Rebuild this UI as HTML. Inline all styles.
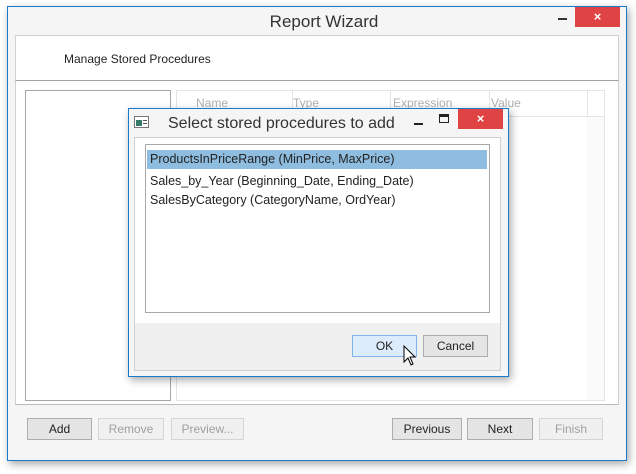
<!DOCTYPE html><html><head><style>
body{margin:0;width:636px;height:474px;background:#fff;position:relative;font-family:"Liberation Sans",sans-serif;font-size:12px;color:#222;overflow:hidden}
div{position:absolute;box-sizing:border-box}
.btn{border:1px solid #adadad;background:#e5e5e5;text-align:center;line-height:21px;font-size:12px}
.dis{color:#a0a0a0;border-color:#d5d5d5;background:#f0f0f0}
</style></head><body>
<div style="left:7px;top:6px;width:620px;height:455px;border:1px solid #1979ca;background:#f5f5f5;box-shadow:2px 3px 8px rgba(0,0,0,.35)"></div>
<div style="left:0;top:12px;width:636px;text-align:center;font-size:17px;color:#333;padding-left:12px">Report Wizard</div>
<div style="left:558px;top:18px;width:9px;height:2px;background:#333"></div>
<div style="left:575px;top:7px;width:45px;height:20px;background:#e04343;color:#fff;text-align:center;font-size:13px;line-height:19px;font-weight:bold">×</div>
<div style="left:15px;top:35px;width:604px;height:46px;background:#fff;border:1px solid #d0d0d0;border-bottom:1px solid #a0a0a0"></div>
<div style="left:64px;top:52px;font-size:12px">Manage Stored Procedures</div>
<div style="left:15px;top:81px;width:604px;height:324px;background:#fff;border-left:1px solid #d0d0d0;border-right:1px solid #d0d0d0;border-bottom:1px solid #bbb"></div>
<div style="left:25px;top:90px;width:146px;height:311px;border:1px solid #a8a8a8"></div>
<div style="left:176px;top:90px;width:429px;height:311px;border:1px solid #e5e5e5"></div>
<div style="left:177px;top:91px;width:427px;height:26px;border-bottom:1px solid #e5e5e5;color:#b0b0b0"><span style="position:absolute;left:19px;top:5px">Name</span><span style="position:absolute;left:116px;top:5px">Type</span><span style="position:absolute;left:216px;top:5px">Expression</span><span style="position:absolute;left:314px;top:5px">Value</span></div>
<div style="left:292px;top:91px;width:1px;height:26px;background:#e5e5e5"></div>
<div style="left:390px;top:91px;width:1px;height:26px;background:#e5e5e5"></div>
<div style="left:489px;top:91px;width:1px;height:26px;background:#e5e5e5"></div>
<div style="left:587px;top:91px;width:1px;height:26px;background:#e5e5e5"></div>
<div style="left:587px;top:117px;width:17px;height:283px;background:#fafafa"></div>
<div style="left:27px;top:418px;width:65px;height:22px" class="btn">Add</div>
<div style="left:98px;top:418px;width:66px;height:22px" class="btn dis">Remove</div>
<div style="left:171px;top:418px;width:73px;height:22px" class="btn dis">Preview...</div>
<div style="left:392px;top:418px;width:70px;height:22px" class="btn">Previous</div>
<div style="left:467px;top:418px;width:66px;height:22px" class="btn">Next</div>
<div style="left:539px;top:418px;width:64px;height:22px" class="btn dis">Finish</div>
<!-- dialog -->
<div style="left:128px;top:108px;width:381px;height:269px;border:1px solid #1979ca;background:#f5f5f5;box-shadow:2px 3px 8px rgba(0,0,0,.35)"></div>
<div style="left:134px;top:116px;width:15px;height:12px;border:1px solid #777;background:#fff"><div style="left:1px;top:3px;width:6px;height:6px;background:#3a7a6a"></div><div style="left:8px;top:3px;width:4px;height:1px;background:#555"></div><div style="left:8px;top:6px;width:4px;height:1px;background:#555"></div></div>
<div style="left:168px;top:115px;font-size:16px;color:#333">Select stored procedures to add</div>
<div style="left:414px;top:123px;width:9px;height:2px;background:#222"></div>
<div style="left:439px;top:114px;width:10px;height:9px;border:1px solid #222;border-top-width:3px"></div>
<div style="left:458px;top:109px;width:45px;height:20px;background:#e04343;color:#fff;text-align:center;font-size:13px;line-height:19px;font-weight:bold">×</div>
<div style="left:134px;top:137px;width:367px;height:234px;border:1px solid #d0d0d0;background:#f0f0f0"></div>
<div style="left:135px;top:138px;width:365px;height:185px;background:#fff"></div>
<div style="left:145px;top:144px;width:345px;height:169px;border:1px solid #a8a8a8;background:#fff"></div>
<div style="left:147px;top:150px;width:340px;height:19px;background:#8fbde0"></div>
<div style="left:150px;top:152px;font-size:12.5px">ProductsInPriceRange (MinPrice, MaxPrice)</div>
<div style="left:150px;top:174px;font-size:12.5px">Sales_by_Year (Beginning_Date, Ending_Date)</div>
<div style="left:150px;top:193px;font-size:12.5px">SalesByCategory (CategoryName, OrdYear)</div>
<div style="left:352px;top:335px;width:65px;height:22px;border-color:#7eb4ea;background:#dcecfc" class="btn">OK</div>
<div style="left:423px;top:335px;width:65px;height:22px" class="btn">Cancel</div>
<svg style="position:absolute;left:403px;top:345px" width="14" height="22"><path d="M1 1 L1 17 L5 13 L8 20 L10 19 L7 12 L12 12 Z" fill="#fff" stroke="#000" stroke-width="1"/></svg>
</body></html>
